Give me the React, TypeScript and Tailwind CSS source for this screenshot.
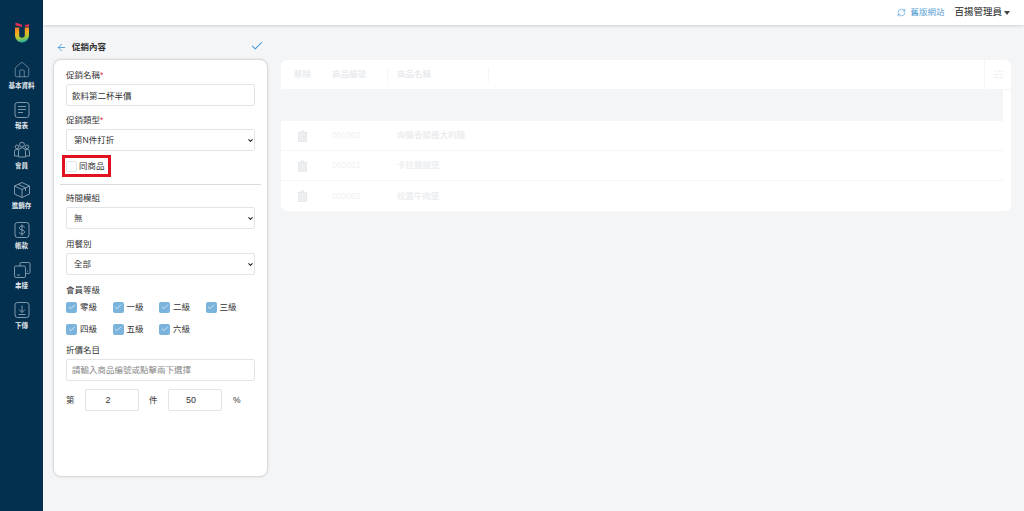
import React from "react";
import {ArrowLeft, Check, ChevronDown, House, RefreshCw, SlidersHorizontal} from "lucide-react";

const FONT = "font-['Liberation_Sans','Noto_Sans_CJK_TC',sans-serif]";

function ReportIcon() {
    return (
        <svg width="18" height="18" viewBox="0 0 18 18" fill="none" stroke="currentColor" strokeWidth="0.9">
            <rect x="2" y="1.5" width="14" height="15" rx="2.5"/>
            <path d="M5 5.5h8M5 8.5h8M5 11.5h5"/>
        </svg>
    );
}

function MemberIcon() {
    return (
        <svg width="18" height="18" viewBox="0 0 18 18" fill="none" stroke="currentColor" strokeWidth="0.9">
            <circle cx="9" cy="3.600" r="2.400"/>
            <circle cx="4" cy="5.800" r="1.800"/>
            <circle cx="14" cy="5.800" r="1.800"/>
            <path d="M5.500 16v-6a3 3 0 0 1 3-3h1a3 3 0 0 1 3 3v6z"/>
            <path d="M5.500 8.500H3.500a2 2 0 0 0-2 2V15h4M12.500 8.500h2a2 2 0 0 1 2 2V15h-4"/>
        </svg>
    );
}

function StockIcon() {
    return (
        <svg width="18" height="18" viewBox="0 0 18 18" fill="none" stroke="currentColor" strokeWidth="0.9">
            <path d="M9 1.500 16.500 5v8L9 16.500 1.500 13V5z"/>
            <path d="M1.500 5 9 8.500 16.500 5M9 8.500v8M5 3.200l7.500 3.600v3"/>
        </svg>
    );
}

function DollarIcon() {
    return (
        <svg width="18" height="18" viewBox="0 0 18 18" fill="none" stroke="currentColor" strokeWidth="0.9">
            <rect x="2" y="1.500" width="14" height="15" rx="2.500"/>
            <path d="M11.500 6.500C11.500 5.500 10.300 5 9 5s-2.500.7-2.500 2S7.700 8.700 9 9s2.600.8 2.600 2.100S10.300 13 9 13s-2.600-.6-2.600-1.700M9 3.500v11"/>
        </svg>
    );
}

function LinkIcon() {
    return (
        <svg width="18" height="18" viewBox="0 0 18 18" fill="none" stroke="currentColor" strokeWidth="0.9">
            <path d="M7 5V2.800a1.300 1.300 0 0 1 1.300-1.300h7.400A1.300 1.300 0 0 1 17 2.800v8.400a1.300 1.300 0 0 1-1.300 1.300H13"/>
            <rect x="1.500" y="5" width="11" height="11.500" rx="1.500"/>
            <path d="M4 14h3M14 10h1"/>
        </svg>
    );
}

function DownloadIcon() {
    return (
        <svg width="18" height="18" viewBox="0 0 18 18" fill="none" stroke="currentColor" strokeWidth="0.9">
            <rect x="2" y="1.500" width="14" height="15" rx="2.500"/>
            <path d="M9 4.500v7M6 8.500l3 3 3-3M5.500 13.500h7"/>
        </svg>
    );
}

function TrashIcon() {
    return (
        <svg width="11" height="12" viewBox="0 0 11 12" fill="#eef0f2" stroke="#e6e8eb" strokeWidth="1">
            <path d="M0.500 2.500h10M4 2.500V1h3v1.500"/>
            <path d="M1.500 2.500h8v9h-8z"/>
            <path d="M4 4.500v5M7 4.500v5"/>
        </svg>
    );
}

function Logo() {
    return (
        <svg width="16" height="21" viewBox="0 0 16 21">
            <defs>
                <linearGradient id="logoGrad" x1="0" y1="0" x2="0.2" y2="1">
                    <stop offset="0" stopColor="#f2742c"/>
                    <stop offset="0.45" stopColor="#f4b01e"/>
                    <stop offset="0.75" stopColor="#a5c83c"/>
                    <stop offset="1" stopColor="#2fb59a"/>
                </linearGradient>
            </defs>
            <path d="M1 5.500h4.200V13a2.800 2.800 0 0 0 5.600 0V5.500H15V13.500a7 7 0 0 1-14 0z" fill="url(#logoGrad)"/>
            <path d="M1.500 0.500 8 2.800V5L1.500 3.200z" fill="#e4304f"/>
            <path d="M11 3.300 15 2v2.800h-4z" fill="#e4304f"/>
        </svg>
    );
}

const navItems = [
    {label: "基本資料", icon: <House size={18} strokeWidth={0.9}/>},
    {label: "報表", icon: <ReportIcon/>},
    {label: "會員", icon: <MemberIcon/>},
    {label: "進銷存", icon: <StockIcon/>},
    {label: "帳款", icon: <DollarIcon/>},
    {label: "串接", icon: <LinkIcon/>},
    {label: "下傳", icon: <DownloadIcon/>},
];

function Sidebar() {
    return (
        <div className="w-[43px] shrink-0 bg-[#04304f] flex flex-col items-center pt-[22px]">
            <Logo/>
            <div className="flex flex-col mt-[17px] gap-[5px]">
                {navItems.map(item => (
                    <div key={item.label} className="h-[35px] flex flex-col items-center text-[#8ea4b4]">
                        <div className="h-[20px] flex items-center">{item.icon}</div>
                        <span className="h-[10px] text-[6.500px] leading-[10px] mt-[1px] font-bold text-[#e4e9ed] whitespace-nowrap">{item.label}</span>
                    </div>
                ))}
            </div>
        </div>
    );
}

function Topbar() {
    return (
        <div className="h-[25px] shrink-0 bg-white shadow-[0_1px_3px_rgba(0,0,0,0.15)] flex items-center justify-end pr-[14px] z-10">
            <RefreshCw size={9} strokeWidth={1.6} className="text-[#3f96d8] mr-[4px]"/>
            <span className="text-[8.500px] text-[#5a9fd4]">舊版網站</span>
            <span className="text-[9.500px] text-[#222] ml-[10px]">百揚管理員</span>
            <span className="ml-[2px] mt-[1px] w-0 h-0 border-l-[3.500px] border-r-[3.500px] border-t-[4px] border-l-transparent border-r-transparent border-t-[#444]"/>
        </div>
    );
}

function FieldLabel(props: { text: string, required?: boolean, className: string }) {
    return (
        <div className={`h-[12px] text-[8.500px] leading-[12px] text-[#333] mb-[3px] ${props.className}`}>
            {props.text}
            {props.required ? <span className="text-[#e0324b]">*</span> : null}
        </div>
    );
}

function SelectBox(props: { value: string }) {
    return (
        <div className="relative">
            <select
                defaultValue={props.value}
                className="appearance-none block w-full h-[22px] bg-white border border-[#e2e4e7] rounded-[2px] text-[8.500px] text-[#333] pl-[7px] outline-none"
            >
                <option value={props.value}>{props.value}</option>
            </select>
            <ChevronDown size={7} strokeWidth={3.5} className="absolute right-[1px] top-[7.500px] text-[#222]"/>
        </div>
    );
}

function LevelCheck(props: { label: string }) {
    return (
        <div className="flex items-center gap-[3px] h-[12px]">
            <span className="w-[11px] h-[11px] rounded-[2px] bg-[#7ab3dc] flex items-center justify-center">
                <Check size={8} strokeWidth={2} className="text-white"/>
            </span>
            <span className="text-[8.500px] text-[#333]">{props.label}</span>
        </div>
    );
}

function FormPanel() {
    const levels = ["零級", "一級", "二級", "三級", "四級", "五級", "六級"];
    return (
        <div className="w-[213px] h-[416px] shrink-0 bg-white rounded-[7px] shadow-[0_0_3px_rgba(0,0,0,0.3)] px-[12px] pt-[9px]">
            <FieldLabel text="促銷名稱" required className=""/>
            <input
                readOnly
                value="飲料第二杯半價"
                className="block w-full h-[22px] bg-white border border-[#e2e4e7] rounded-[2px] text-[8.500px] text-[#333] px-[5px] outline-none"
            />
            <FieldLabel text="促銷類型" required className="mt-[8px]"/>
            <SelectBox value="第N件打折"/>
            <div className="-ml-[4px] mt-[4px] w-[49px] h-[22px] border-[3px] border-[#e3101f] flex items-center gap-[3px]">
                <span className="w-[11px] h-[11px] ml-[1px] shrink-0 rounded-[2px] border border-[#e2e4e7] bg-white"/>
                <span className="text-[8.500px] text-[#333] whitespace-nowrap -ml-[1px]">同商品</span>
            </div>
            <div className="-mx-[6px] mt-[7px] border-t border-[#d9dbde]"/>
            <FieldLabel text="時間模組" className="mt-[7px]"/>
            <SelectBox value="無"/>
            <FieldLabel text="用餐別" className="mt-[9px]"/>
            <SelectBox value="全部"/>
            <FieldLabel text="會員等級" className="mt-[9px] !mb-0"/>
            <div className="grid grid-cols-[46.500px_46.500px_46.500px_46.500px] gap-y-[10px] mt-[5px]">
                {levels.map(level => <LevelCheck key={level} label={level}/>)}
            </div>
            <FieldLabel text="折價名目" className="mt-[9px]"/>
            <input
                readOnly
                placeholder="請輸入商品編號或點擊兩下選擇"
                className="block w-full h-[22px] bg-white border border-[#e2e4e7] rounded-[2px] text-[8.500px] px-[5px] outline-none placeholder:text-[#888]"
            />
            <div className="flex items-center mt-[8px] text-[8.500px] text-[#333]">
                <span className="w-[19px]">第</span>
                <input readOnly value="2" className="w-[54px] h-[22px] border border-[#e2e4e7] rounded-[2px] text-center text-[9px] pr-[8px] outline-none"/>
                <span className="ml-[10px] w-[19px]">件</span>
                <input readOnly value="50" className="w-[54px] h-[22px] border border-[#e2e4e7] rounded-[2px] text-center text-[9px] pr-[8px] outline-none"/>
                <span className="ml-[11px]">%</span>
            </div>
        </div>
    );
}

const rows = [
    {code: "001002", name: "肉醬香腸義大利麵"},
    {code: "002001", name: "卡拉雞腿堡"},
    {code: "002002", name: "松露牛肉堡"},
];

function ProductTable() {
    return (
        <div className="w-full bg-white rounded-[6px] overflow-hidden text-[8.500px]">
            <div className="h-[30px] flex items-center font-bold text-[#e9ebee] border-b border-[#f3f5f7]">
                <span className="w-[51px] pl-[13px]">移除</span>
                <span className="w-[56px] h-[15px] border-r border-[#f3f5f7] leading-[15px]">商品編號</span>
                <span className="w-[101px] h-[15px] pl-[9px] border-r border-[#f3f5f7] leading-[15px]">商品名稱</span>
                <span className="flex-1"/>
                <span className="w-[27px] h-[30px] border-l border-[#f3f5f7] flex items-center pl-[8px]">
                    <SlidersHorizontal size={11} strokeWidth={1.5}/>
                </span>
            </div>
            <div className="mr-[8px]">
                <div className="h-[31px] bg-[#f3f5f7]"/>
                {rows.map(row => (
                    <div key={row.code} className="h-[30px] border-b border-[#f3f5f7] last:border-b-0 flex items-center">
                        <span className="w-[51px] pl-[16px]"><TrashIcon/></span>
                        <span className="w-[65px] text-[#f0f1f3]">{row.code}</span>
                        <span className="font-bold text-[#eceef0]">{row.name}</span>
                    </div>
                ))}
            </div>
        </div>
    );
}

export default function App() {
    return (
        <div className={`${FONT} flex h-screen w-full bg-[#f3f5f7] overflow-hidden`}>
            <Sidebar/>
            <div className="flex-1 flex flex-col min-w-0">
                <Topbar/>
                <div className="flex-1 flex gap-[14px] pl-[11px] pr-[13px]">
                    <div className="w-[213px] shrink-0">
                        <div className="h-[35px] flex items-center pt-[9px] pl-[2px] pr-[2px]">
                            <ArrowLeft size={11} strokeWidth={1.8} className="text-[#3f96d8]"/>
                            <span className="ml-[5px] text-[8.500px] font-bold text-[#333]">促銷內容</span>
                            <Check size={14} strokeWidth={1.8} className="ml-auto mr-[1px] -mt-[2px] text-[#3f96d8]"/>
                        </div>
                        <FormPanel/>
                    </div>
                    <div className="flex-1 pt-[35px] flex items-start">
                        <ProductTable/>
                    </div>
                </div>
            </div>
        </div>
    );
}
